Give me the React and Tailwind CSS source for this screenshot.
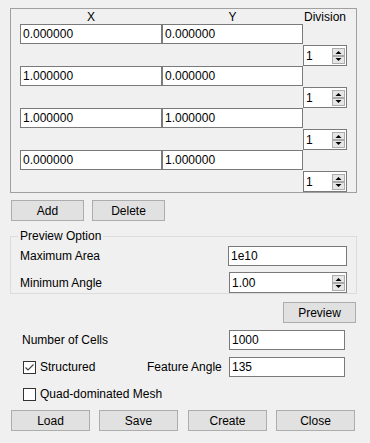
import React from "react";

function Field({ value, w }) {
  return (
    <div
      className="h-[20px] border border-[#7a7a7a] bg-white flex items-center pl-[2px] leading-none shrink-0"
      style={undefined}
    >
      <span className={w}>{value}</span>
    </div>
  );
}

function Arrows() {
  return (
    <svg width="13" height="16" viewBox="0 0 13 16" className="shrink-0">
      <rect x="0.5" y="0.5" width="12" height="15" fill="#e6e6e6" stroke="#acacac" />
      <line x1="1" y1="8" x2="12" y2="8" stroke="#6e6e6e" strokeWidth="1" />
      <polygon points="3.5,6 9.5,6 6.5,3" fill="#000" />
      <polygon points="3.5,10 9.5,10 6.5,13" fill="#000" />
    </svg>
  );
}

function Spinner({ value, className }) {
  return (
    <div
      className={
        "h-[21px] border border-[#7a7a7a] bg-white flex items-center justify-between pl-[2px] pr-[1px] shrink-0 " +
        className
      }
    >
      <span className="leading-none">{value}</span>
      <Arrows />
    </div>
  );
}

function Btn({ children, className }) {
  return (
    <div
      className={
        "h-[21px] border border-[#adadad] bg-[#e1e1e1] flex items-center justify-center leading-none shrink-0 " +
        className
      }
    >
      {children}
    </div>
  );
}

function Check({ checked }) {
  return (
    <svg width="13" height="13" viewBox="0 0 13 13" className="shrink-0">
      <rect x="0.5" y="0.5" width="12" height="12" fill="#fff" stroke="#333" />
      {checked && (
        <polyline points="2.5,6.5 5,9 10.5,3.5" fill="none" stroke="#444" strokeWidth="1.2" />
      )}
    </svg>
  );
}

const rows = [
  ["0.000000", "0.000000"],
  ["1.000000", "0.000000"],
  ["1.000000", "1.000000"],
  ["0.000000", "1.000000"],
];

export default function App() {
  return (
    <div className="w-[370px] h-[443px] bg-[#f0f0f0] overflow-hidden text-[12px] text-black font-['Liberation_Sans',Arial,sans-serif] pt-[8px]">
      {/* Points frame */}
      <div className="ml-[10px] w-[347px] h-[185px] border border-[#a0a0a0] pl-[9px]">
        <div className="flex h-[15px] items-center leading-none">
          <div className="w-[142px] text-center">X</div>
          <div className="w-[141px] text-center">Y</div>
          <div className="w-[44px] text-center">Division</div>
        </div>
        {rows.map((r, i) => (
          <div key={i}>
            <div className="flex">
              <div className="w-[142px] h-[20px] border border-[#7a7a7a] bg-white flex items-center pl-[2px] leading-none">
                {r[0]}
              </div>
              <div className="w-[141px] h-[20px] border border-[#7a7a7a] bg-white flex items-center pl-[2px] leading-none">
                {r[1]}
              </div>
            </div>
            <Spinner value="1" className="w-[44px] ml-[283px] mt-[1px]" />
          </div>
        ))}
      </div>

      {/* Add / Delete */}
      <div className="flex mt-[7px] ml-[11px]">
        <Btn className="w-[73px]">Add</Btn>
        <Btn className="w-[73px] ml-[8px]">Delete</Btn>
      </div>

      {/* Preview Option group */}
      <fieldset className="ml-[10px] mt-[8px] w-[347px] border border-[#dcdcdc] px-[9px] pb-0">
        <legend className="ml-[-2px] px-[2px] leading-[14px]">Preview Option</legend>
        <div className="flex items-center justify-between mt-[3px] h-[20px]">
          <span className="leading-none">Maximum Area</span>
          <div className="w-[119px] h-[20px] border border-[#7a7a7a] bg-white flex items-center pl-[2px] leading-none">
            1e10
          </div>
        </div>
        <div className="flex items-center justify-between mt-[6px] h-[21px]">
          <span className="leading-none">Minimum Angle</span>
          <Spinner value="1.00" className="w-[118px]" />
        </div>
      </fieldset>

      {/* Preview button */}
      <div className="flex mt-[8px] ml-[283px]">
        <Btn className="w-[73px]">Preview</Btn>
      </div>

      {/* Number of cells */}
      <div className="flex items-center mt-[7px] h-[20px] ml-[22px]">
        <span className="w-[207px] leading-none">Number of Cells</span>
        <div className="w-[116px] h-[20px] border border-[#7a7a7a] bg-white flex items-center pl-[2px] leading-none">
          1000
        </div>
      </div>

      {/* Structured / Feature Angle */}
      <div className="flex items-center mt-[7px] h-[20px] ml-[23px]">
        <Check checked />
        <span className="ml-[4px] w-[107px] leading-none">Structured</span>
        <span className="leading-none w-[82px]">Feature Angle</span>
        <div className="w-[116px] h-[20px] border border-[#7a7a7a] bg-white flex items-center pl-[2px] leading-none">
          135
        </div>
      </div>

      {/* Quad-dominated */}
      <div className="flex items-center mt-[7px] h-[20px] ml-[23px]">
        <Check />
        <span className="ml-[4px] leading-none">Quad-dominated Mesh</span>
      </div>

      {/* Bottom buttons */}
      <div className="flex mt-[6px] ml-[11px]">
        <Btn className="w-[79px]">Load</Btn>
        <Btn className="w-[79px] ml-[9px]">Save</Btn>
        <Btn className="w-[79px] ml-[10px]">Create</Btn>
        <Btn className="w-[79px] ml-[9px]">Close</Btn>
      </div>
    </div>
  );
}
